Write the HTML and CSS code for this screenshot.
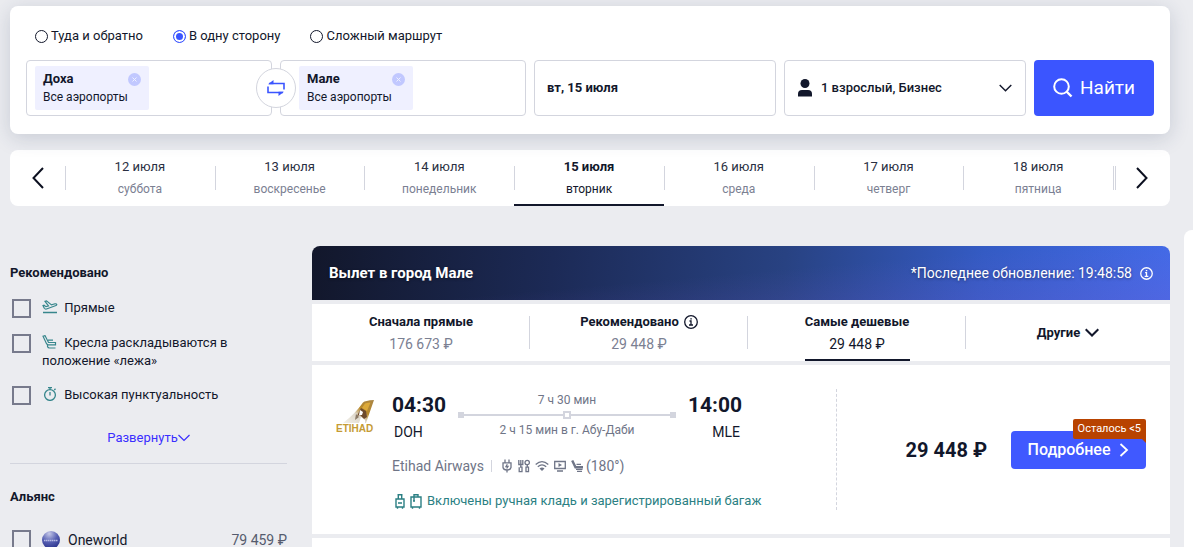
FILE: index.html
```html
<!DOCTYPE html>
<html lang="ru">
<head>
  <meta charset="UTF-8" />
  <meta name="viewport" content="width=device-width, initial-scale=1.0" />
  <title>Доха — Мале</title>
  <link rel="stylesheet" href="styles.css">
</head>
<body>
  <div class="page">
    <div class="content">
      <form class="search">
        <div class="trip-types">
          <label><input type="radio" name="trip" value="rt">Туда и обратно</label>
          <label><input type="radio" name="trip" value="ow" checked>В одну сторону</label>
          <label><input type="radio" name="trip" value="mt">Сложный маршрут</label>
        </div>

        <div class="fields">
          <div class="field city">
            <div class="chip">
              <div class="chip-top">
                <b>Доха</b>
                <button type="button" class="chip-close" aria-label="Удалить">
                  <svg width="13" height="13" viewBox="0 0 13 13"><path d="M4.5 4.5l4 4M8.5 4.5l-4 4" stroke="#eef0ff" fill="none"/></svg>
                </button>
              </div>
              <span>Все аэропорты</span>
            </div>
            <input type="text" aria-label="Откуда">
            <button type="button" class="swap" aria-label="Поменять местами">
              <svg width="18" height="16" viewBox="0 0 18 16"><path d="M2 3.500H17V9.500M1 6.500V12.500H16" fill="none" stroke="#3b55ff" stroke-width="1.600"/><path d="M1 4.200L6.500 0v4.200zM17 11.800L11.500 16v-4.200z" fill="#3b55ff"/></svg>
            </button>
          </div>
          <div class="field city">
            <div class="chip">
              <div class="chip-top">
                <b>Мале</b>
                <button type="button" class="chip-close" aria-label="Удалить">
                  <svg width="13" height="13" viewBox="0 0 13 13"><path d="M4.5 4.5l4 4M8.5 4.5l-4 4" stroke="#eef0ff" fill="none"/></svg>
                </button>
              </div>
              <span>Все аэропорты</span>
            </div>
            <input type="text" aria-label="Куда">
          </div>
          <div class="field date">
            <input type="text" value="вт, 15 июля" aria-label="Дата вылета">
          </div>
          <div class="field passengers">
            <svg width="14" height="18" viewBox="0 0 14 18"><circle cx="7" cy="4.500" r="4.500" fill="#12172b"/><path d="M0 17.500v-2.500q0-4 4-4h6q4 0 4 4v2.500z" fill="#12172b"/></svg>
            <select aria-label="Пассажиры и класс">
              <option>1 взрослый, Бизнес</option>
            </select>
            <svg width="13" height="8" viewBox="0 0 13 8"><path d="M.7 1l5.800 5.800L12.300 1" fill="none" stroke="#12172b" stroke-width="1.400"/></svg>
          </div>
          <button type="submit" class="find">
            <svg width="20" height="20" viewBox="0 0 20 20"><circle cx="8.500" cy="8.500" r="7.300" fill="none" stroke="#fff" stroke-width="2"/><path d="M13.500 13.500l5 5" stroke="#fff" stroke-width="2.400"/></svg>
            Найти
          </button>
        </div>
      </form>

      <nav class="days">
        <button type="button" class="arrow" aria-label="Раньше">
          <svg width="12" height="22" viewBox="0 0 12 22"><path d="M11 1L1.500 11 11 21" fill="none" stroke="#0c1020" stroke-width="2"/></svg>
        </button>
        <a class="day" href="#"><span>12 июля</span><small>суббота</small></a>
        <a class="day" href="#"><span>13 июля</span><small>воскресенье</small></a>
        <a class="day" href="#"><span>14 июля</span><small>понедельник</small></a>
        <a class="day active" href="#"><span>15 июля</span><small>вторник</small></a>
        <a class="day" href="#"><span>16 июля</span><small>среда</small></a>
        <a class="day" href="#"><span>17 июля</span><small>четверг</small></a>
        <a class="day" href="#"><span>18 июля</span><small>пятница</small></a>
        <button type="button" class="arrow next" aria-label="Позже">
          <svg width="12" height="22" viewBox="0 0 12 22"><path d="M1 1l9.500 10L1 21" fill="none" stroke="#0c1020" stroke-width="2"/></svg>
        </button>
      </nav>

      <div class="columns">
        <aside class="filters">
          <section>
            <h2>Рекомендовано</h2>
            <label class="filter">
              <input type="checkbox">
              <span>
                <svg class="icon" width="16" height="14" viewBox="0 0 16 14" fill="none" stroke="#36868c" stroke-width="1.200"><path d="M1 12.500h14" stroke-width="1.500"/><path d="M1 5.500l1-.300 2 1.500 2.500-.700L3 1.300l1.500-.400 5 4L13 3.800q1.500-.300 1.800.800-.200.800-1.500 1.200L4.500 9Q3 9.300 2.300 8.200z"/></svg>
                Прямые
              </span>
            </label>
            <label class="filter">
              <input type="checkbox">
              <span>
                <svg class="icon" width="16" height="14" viewBox="0 0 16 14" fill="none" stroke="#36868c" stroke-width="1.200"><path d="M1 1.200l2-.600 3.500 6.900h7v2.300H6.300Q5 9.800 4.300 8.300zM6 5.200h5M5.500 10v1.500q.5 1.500 2 1.500h6"/></svg>
                Кресла раскладываются в положение «лежа»
              </span>
            </label>
            <label class="filter">
              <input type="checkbox">
              <span>
                <svg class="icon" width="16" height="14" viewBox="0 0 16 14" fill="none" stroke="#36868c" stroke-width="1.300"><circle cx="8" cy="8" r="5.400"/><path d="M6 .700h4M8 .700v2M8 5v3.500M12.300 3l1.200-1.200"/></svg>
                Высокая пунктуальность
              </span>
            </label>
            <button type="button" class="expand">Развернуть<svg width="12" height="8" viewBox="0 0 12 8"><path d="M.5 1L6 6.500 11.500 1" fill="none" stroke="#3a2eff" stroke-width="1.200"/></svg></button>
          </section>
          <section>
            <h2>Альянс</h2>
            <label class="filter alliance">
              <input type="checkbox">
              <svg width="18" height="18" viewBox="0 0 18 18">
                <defs><radialGradient id="globe" cx=".4" cy=".15" r=".9"><stop offset="0" stop-color="#c5c8e8"/><stop offset=".5" stop-color="#5962b4"/><stop offset="1" stop-color="#252d88"/></radialGradient></defs>
                <circle cx="9" cy="9" r="9" fill="url(#globe)"/><path d="M2 9.500h14" stroke="#b9bde6" stroke-width="1.600" stroke-dasharray="1.500 .5"/>
              </svg>
              <span>Oneworld</span>
              <span class="filter-price">79 459 ₽</span>
            </label>
          </section>
        </aside>

        <main class="results">
          <header class="banner">
            <h1>Вылет в город Мале</h1>
            <span>*Последнее обновление: 19:48:58</span>
            <svg width="13" height="13" viewBox="0 0 14 14" fill="none" stroke="#fff" stroke-width="1.400"><circle cx="7" cy="7" r="6.200"/><path d="M5.500 6H7v4M5 10h4M6.300 3.800h1.500"/></svg>
          </header>

          <div class="sorts">
            <button type="button" class="sort">
              <span class="sort-name">Сначала прямые</span>
              <span class="sort-price">176 673 ₽</span>
            </button>
            <button type="button" class="sort">
              <span class="sort-name">Рекомендовано
                <svg width="14" height="14" viewBox="0 0 14 14" fill="none" stroke="#12172b" stroke-width="1.300"><circle cx="7" cy="7" r="6.300"/><path d="M5.500 6H7v4M5 10h4M6.300 3.800h1.500"/></svg>
              </span>
              <span class="sort-price">29 448 ₽</span>
            </button>
            <button type="button" class="sort active">
              <span class="sort-name">Самые дешевые</span>
              <span class="sort-price">29 448 ₽</span>
            </button>
            <button type="button" class="sort other">
              <span class="sort-name">Другие
                <svg width="14" height="9" viewBox="0 0 14 9"><path d="M.700 1.200L7 7.500l6.300-6.300" fill="none" stroke="#12172b" stroke-width="2"/></svg>
              </span>
            </button>
          </div>

          <article class="flight">
            <div class="flight-info">
              <svg class="airline-logo" width="40" height="34" viewBox="0 0 40 34">
                <defs><linearGradient id="tail" x1="0" y1="1" x2="1" y2="0"><stop offset="0" stop-color="#f4f1ea"/><stop offset=".4" stop-color="#ded8cc"/><stop offset=".6" stop-color="#b98a2b"/><stop offset="1" stop-color="#a98546"/></linearGradient></defs>
                <path d="M7 24Q19 15 27 3.500 29 1.500 38 1L30 24z" fill="url(#tail)"/>
                <path d="M29 4.500q3-1 5.500-1L31 12l-5-3z" fill="#dca93a"/>
                <path d="M25 9l5 3 1 6-3 2-4-4-3 1z" fill="#6f4b2c"/>
                <path d="M24 11l3 2-1 3-3 0zM25 18l4 3v3h-6z" fill="#fff"/>
                <path d="M20 15l3 3-4 3z" fill="#8b7a66"/>
                <text class="logo-text" x="0" y="33">ETIHAD</text>
              </svg>
              <div class="flight-body">
                <div class="route">
                  <div class="point">
                    <b>04:30</b>
                    <span>DOH</span>
                  </div>
                  <div class="path">
                    <span>7 ч 30 мин</span>
                    <div class="line"><i></i><i class="stop"></i><i></i></div>
                    <span>2 ч 15 мин в г. Абу-Даби</span>
                  </div>
                  <div class="point arrival">
                    <b>14:00</b>
                    <span>MLE</span>
                  </div>
                </div>
                <div class="airline">
                  <span class="airline-name">Etihad Airways</span>
                  <svg width="12" height="14" viewBox="0 0 12 14" fill="none" stroke="#6f7587" stroke-width="1.300"><path d="M4 .500v3M8 .500v3M2 3.800h8v4.700q-.5 2.500-4 2.500t-4-2.500zM6 11v2.500M6.300 5.200L5 7.500h2L5.700 9.500"/></svg>
                  <svg width="12" height="14" viewBox="0 0 12 14" fill="none" stroke="#6f7587" stroke-width="1.300"><path d="M.800 1v4.500h4V1M2.800 1v7M2 8.200h2v4.500H1.200V8.200M8 8.200h2.500v4.500H8zM9.300 6v2"/><circle cx="9.200" cy="3.500" r="2.200"/></svg>
                  <svg width="14" height="12" viewBox="0 0 14 12" fill="none" stroke="#6f7587" stroke-width="1.300"><path d="M.700 4.500Q7-1.300 13.300 4.500M2.800 6.800Q7 3 11.200 6.800"/><path d="M4.500 8.500Q7 6.500 9.500 8.500L7 11z" fill="#6f7587" stroke="none"/></svg>
                  <svg width="12" height="12" viewBox="0 0 12 12" fill="none" stroke="#6f7587" stroke-width="1.300"><path d="M.700 1.500h10.600v7H.700zM3 11h6"/><path d="M4.500 3l3.500 2-3.500 2z" fill="#6f7587" stroke="none"/></svg>
                  <span class="seat">
                    <svg width="13" height="12" viewBox="0 0 13 12" fill="none" stroke="#6f7587"><path d="M1.200.500l3.300 6.800h7.500" stroke-width="2.400"/><path d="M5.500 4.300H10M5 9.300h6.500M6 11.300h5" stroke-width="1.300"/></svg>
                    (180°)
                  </span>
                </div>
                <div class="baggage">
                  <svg width="10" height="15" viewBox="0 0 10 15" fill="none" stroke="#2b7f83" stroke-width="1.400"><path d="M1 5h8v8H1zM3.300 5V.800h3.400V5M2.500.800h5M2.500 13v1.700M7.500 13v1.700M3 9h4"/></svg>
                  <svg width="12" height="15" viewBox="0 0 12 15" fill="none" stroke="#2b7f83" stroke-width="1.400"><path d="M1 3h10v10H1zM4 3V.800h4V3M2.500 13v1.700M9.500 13v1.700M4 3v4.500M3 7h2"/></svg>
                  Включены ручная кладь и зарегистрированный багаж
                </div>
              </div>
            </div>
            <div class="flight-buy">
              <b class="price">29 448 ₽</b>
              <button type="button" class="details">
                Подробнее
                <svg width="10" height="14" viewBox="0 0 10 14"><path d="M1.500 1l6.500 6-6.500 6" fill="none" stroke="#fff" stroke-width="1.800"/></svg>
                <span class="badge">Осталось &lt;5</span>
              </button>
            </div>
          </article>
          <article class="flight"></article>
        </main>
      </div>
    </div>
    <div class="side"></div>
  </div>
</body>
</html>
```
FILE: styles.css
```css
* {
  box-sizing: border-box;
}

body {
  margin: 0;
  height: 100vh;
  overflow: hidden;
  background: #ebecf0;
  color: #12172b;
  font-family: Roboto, "Noto Sans", sans-serif;
  font-size: 13px;
  line-height: 18px;
}

button,
input,
select {
  margin: 0;
  padding: 0;
  border: 0;
  background: none;
  color: inherit;
  font: inherit;
}

button {
  cursor: pointer;
}

svg {
  flex: none;
}

h1,
h2 {
  margin: 0;
}

.page {
  display: flex;
  gap: 14px;
  padding: 6px 0 0 10px;
}

.content {
  flex: 1;
  min-width: 0;
}

.side {
  width: 9px;
  height: 100vh;
  margin-top: 224px;
  border-top-left-radius: 8px;
  background: white;
}

/* search form */
.search {
  position: relative;
  z-index: 1;
  padding: 20px 16px 18px;
  border-radius: 8px;
  background: white;
  box-shadow: 0 4px 20px rgba(40, 55, 90, 0.18);
}

.trip-types {
  display: flex;
  gap: 30px;
  padding-left: 9px;
  margin-bottom: 14px;
}

.trip-types label {
  display: flex;
  align-items: center;
  gap: 3px;
  height: 20px;
}

.trip-types input {
  appearance: none;
  width: 13px;
  height: 13px;
  border: 1px solid #12172b;
  border-radius: 50%;
}

.trip-types input:checked {
  border-color: #3b55ff;
  background: #3b55ff;
  box-shadow: inset 0 0 0 2px white;
}

.fields {
  display: grid;
  grid-template-columns: 246fr 246fr 242fr 242fr 120px;
  gap: 8px;
}

.field {
  display: flex;
  align-items: center;
  min-width: 0;
  height: 56px;
  border: 1px solid #d3d5de;
  border-radius: 4px;
}

.field input,
.field select {
  flex: 1;
  min-width: 0;
  outline: none;
}

.city {
  position: relative;
  padding-left: 8px;
}

.city + .city {
  padding-left: 18px;
}

.chip {
  width: 114px;
  height: 44px;
  padding: 4px 8px;
  border-radius: 2px;
  background: #eff0ff;
  font-size: 12px;
}

.chip-top {
  display: flex;
  align-items: center;
  justify-content: space-between;
  font-size: 13px;
}

.chip-close {
  display: flex;
  border-radius: 50%;
  background: #c1c8ff;
}

.swap {
  position: absolute;
  z-index: 1;
  top: 7px;
  right: -25px;
  display: flex;
  align-items: center;
  justify-content: center;
  width: 40px;
  height: 40px;
  border: 1px solid #d3d5de;
  border-radius: 50%;
  background: white;
}

.date {
  padding: 0 12px;
  font-weight: bold;
}

.passengers {
  gap: 9px;
  padding: 0 13px;
}

.passengers select {
  appearance: none;
  font-weight: 500;
}

.find {
  display: flex;
  align-items: center;
  justify-content: center;
  gap: 7px;
  border-radius: 4px;
  background: #3b55ff;
  color: white;
  font-size: 19px;
}

/* days */
.days {
  display: flex;
  height: 56px;
  margin-top: 16px;
  border-radius: 8px;
  background: white;
}

.arrow {
  width: 55px;
}

.arrow svg {
  vertical-align: middle;
}

.day {
  display: flex;
  flex: 1;
  flex-direction: column;
  align-items: center;
  gap: 4px;
  padding-top: 8px;
  background: linear-gradient(#d3d5de, #d3d5de) 0 16px / 1px 24px no-repeat;
  color: #2a2f42;
  text-decoration: none;
}

.day small {
  color: #7b8092;
  font-size: 12px;
}

.day.active {
  border-bottom: 2px solid #12172b;
  color: #12172b;
  font-weight: bold;
}

.day.active small {
  color: #12172b;
  font-weight: normal;
}

.next {
  width: 57px;
  background: linear-gradient(90deg, #d3d5de 1px, transparent 1px, transparent 2px, #d3d5de 2px) 0 16px / 3px 24px no-repeat;
}

.columns {
  display: flex;
  gap: 25px;
  margin-top: 40px;
}

/* filters */
.filters {
  width: 277px;
  padding-top: 18px;
}

.filters section {
  margin-bottom: 24px;
  border-bottom: 1px solid #d3d5de;
}

.filters h2 {
  margin-bottom: 17px;
  font-size: 13px;
}

.filter {
  display: flex;
  align-items: flex-start;
  gap: 11px;
  width: 235px;
  margin-bottom: 16px;
  padding-left: 2px;
}

.filter input {
  flex: none;
  appearance: none;
  width: 19px;
  height: 19px;
  border: 2px solid #777a8c;
}

.icon {
  margin-right: 3px;
  vertical-align: -2px;
}

.expand {
  display: flex;
  align-items: center;
  margin: 24px auto 16px;
  color: #3a2eff;
}

.alliance {
  align-items: center;
  gap: 8px;
  width: auto;
  margin-top: 24px;
  font-size: 14px;
}

.alliance input {
  margin-right: 3px;
}

.filter-price {
  margin-left: auto;
  color: #555b6d;
}

/* results */
.results {
  display: flex;
  flex: 1;
  flex-direction: column;
  gap: 4px;
  min-width: 0;
}

.banner {
  display: flex;
  align-items: center;
  gap: 8px;
  height: 54px;
  padding: 0 17px;
  border-radius: 8px 8px 0 0;
  background: linear-gradient(175deg, transparent 50%, rgba(120, 90, 210, 0.25)), linear-gradient(95deg, #12172b, #1c2a56 28%, #284282 55%, #345bc4 78%, #416be8);
  color: white;
  font-size: 14px;
  text-shadow: 0 1px 3px rgba(0, 0, 0, 0.4);
}

.banner h1 {
  margin-right: auto;
  font-size: 15px;
}

.sorts {
  display: grid;
  grid-template-columns: 218fr 218fr 218fr 204fr;
  height: 57px;
  background: white;
}

.sort {
  display: flex;
  flex-direction: column;
  align-items: center;
  padding-top: 9px;
  background: linear-gradient(#d3d5de, #d3d5de) right 12px / 1px 33px no-repeat;
}

.other {
  justify-content: center;
  padding-top: 0;
  background: none;
}

.sort-name {
  display: flex;
  align-items: center;
  gap: 5px;
  font-weight: bold;
}

.sort-price {
  width: 105px;
  padding: 4px 0 6px;
  border-bottom: 2px solid transparent;
  color: #7b8092;
  font-size: 14px;
}

.sort.active .sort-price {
  border-color: #12172b;
  color: #12172b;
}

.flight {
  display: flex;
  min-height: 169px;
  padding: 24px;
  background: white;
}

.flight-info {
  display: flex;
  flex: 1;
  gap: 16px;
  min-width: 0;
  padding-right: 94px;
  border-right: 1px dashed #d3d5de;
}

.airline-logo {
  margin-top: 10px;
}

.logo-text {
  fill: #c59b34;
  font: bold 10px "Liberation Sans", Arial, sans-serif;
}

.flight-body {
  flex: 1;
  min-width: 0;
}

.route {
  display: flex;
  justify-content: space-between;
}

.point {
  display: flex;
  flex-direction: column;
  gap: 7px;
  padding-top: 5px;
  font-size: 14px;
}

.point b {
  font-size: 21px;
  line-height: 22px;
}

.point span {
  padding: 0 2px;
}

.arrival {
  align-items: flex-end;
}

.path {
  display: flex;
  flex-direction: column;
  align-items: center;
  width: 218px;
  padding-top: 2px;
  color: #6f7587;
  font-size: 12px;
}

.line {
  display: flex;
  align-items: center;
  justify-content: space-between;
  align-self: stretch;
  height: 12px;
  background: linear-gradient(#d3d5de, #d3d5de) center / 100% 2px no-repeat;
}

.line i {
  width: 6px;
  height: 6px;
  background: #d3d5de;
}

.line .stop {
  width: 8px;
  height: 8px;
  border: 2px solid #d3d5de;
  background: white;
}

.airline {
  display: flex;
  align-items: center;
  gap: 5px;
  margin-top: 16px;
  color: #6f7587;
  font-size: 14px;
}

.airline-name {
  margin-right: 4px;
  padding-right: 7px;
  border-right: 1px solid #d3d5de;
  line-height: 12px;
}

.seat {
  display: flex;
  align-items: center;
  gap: 2px;
}

.baggage {
  display: flex;
  align-items: center;
  gap: 5px;
  margin-top: 17px;
  padding-left: 3px;
  color: #2b7f83;
  white-space: nowrap;
}

.flight-buy {
  display: flex;
  align-items: center;
  justify-content: flex-end;
  gap: 24px;
  width: 309px;
}

.price {
  font-size: 20px;
}

.details {
  position: relative;
  display: flex;
  align-items: center;
  justify-content: center;
  gap: 9px;
  width: 135px;
  height: 38px;
  border-radius: 4px;
  background: #4059ff;
  color: white;
  font-size: 16px;
  font-weight: 500;
}

.badge {
  position: absolute;
  top: -12px;
  right: 0;
  padding: 1px 5px;
  border-radius: 2px 2px 0 2px;
  background: #b84300;
  font-size: 11px;
  font-weight: normal;
}

.badge::after {
  content: "";
  position: absolute;
  top: 100%;
  right: 0;
  border-top: 4px solid #b84300;
  border-left: 4px solid transparent;
}
```
